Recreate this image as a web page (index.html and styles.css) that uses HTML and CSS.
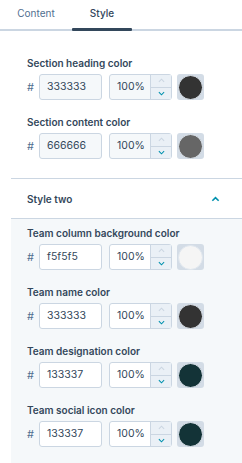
FILE: index.html
```html
<!DOCTYPE html>
<html lang="en">
<head>
    <meta charset="UTF-8">
    <meta name="viewport" content="width=device-width, initial-scale=1.0">
    <title>Style panel</title>
    <link rel="stylesheet" href="styles.css">
</head>
<body>
    <div class="tabs">
        <div class="tab">Content</div>
        <div class="tab active">Style</div>
    </div>

    <div class="panel">
        <div class="section">
            <div class="field">
                <div class="label">Section heading color</div>
                <div class="color-row">
                    <span class="hash">#</span>
                    <div class="hex">333333</div>
                    <div class="opacity">
                        <div class="pct">100%</div>
                        <div class="stepper">
                            <div class="step up"><svg viewBox="0 0 8 5"><path d="M1 4 L4 1 L7 4"/></svg></div>
                            <div class="step down"><svg viewBox="0 0 8 5"><path d="M1 1 L4 4 L7 1"/></svg></div>
                        </div>
                    </div>
                    <div class="swatch"><span class="dot" style="background:#333333"></span></div>
                </div>
            </div>
            <div class="field">
                <div class="label">Section content color</div>
                <div class="color-row">
                    <span class="hash">#</span>
                    <div class="hex">666666</div>
                    <div class="opacity">
                        <div class="pct">100%</div>
                        <div class="stepper">
                            <div class="step up"><svg viewBox="0 0 8 5"><path d="M1 4 L4 1 L7 4"/></svg></div>
                            <div class="step down"><svg viewBox="0 0 8 5"><path d="M1 1 L4 4 L7 1"/></svg></div>
                        </div>
                    </div>
                    <div class="swatch"><span class="dot" style="background:#666666"></span></div>
                </div>
            </div>
        </div>

        <div class="group-head">
            <span>Style two</span>
            <svg class="chevron" viewBox="0 0 10 6"><path d="M1.5 5 L5 1.5 L8.5 5"/></svg>
        </div>

        <div class="section group-body">
            <div class="field">
                <div class="label">Team column background color</div>
                <div class="color-row">
                    <span class="hash">#</span>
                    <div class="hex">f5f5f5</div>
                    <div class="opacity">
                        <div class="pct">100%</div>
                        <div class="stepper">
                            <div class="step up"><svg viewBox="0 0 8 5"><path d="M1 4 L4 1 L7 4"/></svg></div>
                            <div class="step down"><svg viewBox="0 0 8 5"><path d="M1 1 L4 4 L7 1"/></svg></div>
                        </div>
                    </div>
                    <div class="swatch"><span class="dot" style="background:#f5f5f5"></span></div>
                </div>
            </div>
            <div class="field">
                <div class="label">Team name color</div>
                <div class="color-row">
                    <span class="hash">#</span>
                    <div class="hex">333333</div>
                    <div class="opacity">
                        <div class="pct">100%</div>
                        <div class="stepper">
                            <div class="step up"><svg viewBox="0 0 8 5"><path d="M1 4 L4 1 L7 4"/></svg></div>
                            <div class="step down"><svg viewBox="0 0 8 5"><path d="M1 1 L4 4 L7 1"/></svg></div>
                        </div>
                    </div>
                    <div class="swatch"><span class="dot" style="background:#333333"></span></div>
                </div>
            </div>
            <div class="field">
                <div class="label">Team designation color</div>
                <div class="color-row">
                    <span class="hash">#</span>
                    <div class="hex">133337</div>
                    <div class="opacity">
                        <div class="pct">100%</div>
                        <div class="stepper">
                            <div class="step up"><svg viewBox="0 0 8 5"><path d="M1 4 L4 1 L7 4"/></svg></div>
                            <div class="step down"><svg viewBox="0 0 8 5"><path d="M1 1 L4 4 L7 1"/></svg></div>
                        </div>
                    </div>
                    <div class="swatch"><span class="dot" style="background:#133337"></span></div>
                </div>
            </div>
            <div class="field">
                <div class="label">Team social icon color</div>
                <div class="color-row">
                    <span class="hash">#</span>
                    <div class="hex">133337</div>
                    <div class="opacity">
                        <div class="pct">100%</div>
                        <div class="stepper">
                            <div class="step up"><svg viewBox="0 0 8 5"><path d="M1 4 L4 1 L7 4"/></svg></div>
                            <div class="step down"><svg viewBox="0 0 8 5"><path d="M1 1 L4 4 L7 1"/></svg></div>
                        </div>
                    </div>
                    <div class="swatch"><span class="dot" style="background:#133337"></span></div>
                </div>
            </div>
        </div>
    </div>
</body>
</html>
```

FILE: styles.css
```css
/* Panel gaya HubSpot-ish */
body {
    margin: 0;
    font-family: 'Inter', sans-serif;
    color: #33475b;
    background-color: #ffffff;
    width: 242px;
    height: 463px;
    overflow: hidden;
}

.tabs {
    display: flex;
    gap: 6px;
    padding-left: 6px;
    height: 29px;
    border-bottom: 2px solid #cbd6e2;
}

.tab {
    width: 60px;
    text-align: center;
    font-size: 10px;
    line-height: 26px;
    color: #516f90;
}

.tab.active {
    color: #33475b;
    font-weight: 500;
    position: relative;
}

.tab.active::after {
    content: '';
    position: absolute;
    left: 0;
    right: 0;
    bottom: -2px;
    height: 3px;
    background-color: #33475b;
    border-radius: 1px;
}

.panel {
    margin-left: 11px;
}

.section {
    padding: 24px 16px 5px;
}

.field {
    margin-bottom: 14px;
}

.label {
    font-size: 10px;
    font-weight: 600;
    line-height: 16px;
    margin-bottom: 3px;
}

.color-row {
    display: flex;
    align-items: center;
    height: 26px;
}

.hash {
    width: 12px;
    font-size: 11px;
    color: #516f90;
}

.hex {
    width: 54px;
    height: 24px;
    padding-left: 7px;
    border: 1px solid #cbd6e2;
    border-radius: 3px;
    background-color: #f5f8fa;
    font-size: 10.5px;
    line-height: 24px;
    color: #33475b;
}

.opacity {
    display: flex;
    width: 61px;
    height: 24px;
    margin-left: 7px;
    border: 1px solid #cbd6e2;
    border-radius: 3px;
    background-color: #f5f8fa;
}

.pct {
    flex: 1;
    padding-left: 7px;
    font-size: 10.5px;
    line-height: 24px;
    color: #33475b;
}

.stepper {
    width: 20px;
    display: flex;
    flex-direction: column;
    border-left: 1px solid #cbd6e2;
    background-color: #eaf0f6;
}

.step {
    flex: 1;
    display: flex;
    align-items: center;
    justify-content: center;
}

.step.up {
    border-bottom: 1px solid #cbd6e2;
}

.step svg {
    width: 7px;
    height: 5px;
    fill: none;
    stroke-width: 1.2;
}

.step.up svg {
    stroke: #cbd6e2;
}

.step.down svg {
    stroke: #0091ae;
}

.swatch {
    width: 27px;
    height: 26px;
    margin-left: 5px;
    border-radius: 3px;
    background-color: #d3dce6;
    display: flex;
    align-items: center;
    justify-content: center;
}

.dot {
    width: 25px;
    height: 25px;
    border-radius: 50%;
    box-sizing: border-box;
    border: 1px solid #dfe6ee;
}

.group-head {
    display: flex;
    align-items: center;
    justify-content: space-between;
    height: 39px;
    padding: 0 22px 0 16px;
    border-top: 1px solid #cbd6e2;
    border-bottom: 1px solid #cbd6e2;
    font-size: 10px;
    font-weight: 600;
}

.chevron {
    width: 9px;
    height: 6px;
    fill: none;
    stroke: #0091ae;
    stroke-width: 1.8;
}

.group-body {
    background-color: #f5f8fa;
    padding-top: 6px;
    padding-bottom: 2px;
}

.group-body .hex,
.group-body .opacity {
    background-color: #ffffff;
}
```
